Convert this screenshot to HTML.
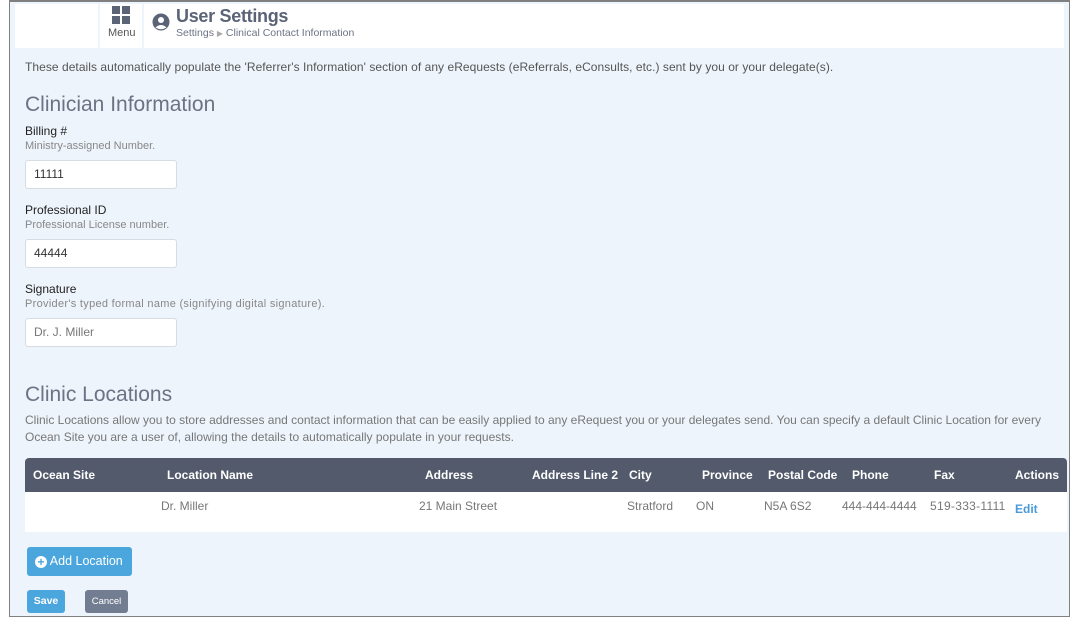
<!DOCTYPE html>
<html><head><style>
*{box-sizing:border-box;margin:0;padding:0}
body{width:1071px;height:617px;background:#fff;font-family:"Liberation Sans",sans-serif;position:relative;overflow:hidden}
.frame{position:absolute;left:9px;top:0;width:1061px;height:617px;border:1px solid #808080;border-top:2px solid #808080;background:#edf4fb}
.a{position:absolute;white-space:nowrap}
.hdr{position:absolute;left:5px;top:2px;width:1049px;height:44px;background:#fff}
.lbl{font-size:12px;color:#222}
.sub{font-size:11px;color:#888}
.inp{position:absolute;left:15px;width:152px;height:29px;background:#fff;border:1px solid #d5dce4;border-radius:3px;font-size:12px;color:#333;padding:6px 8px}
</style></head><body>
<div class="frame">
 <div class="hdr">
  <div class="a" style="left:83px;top:0;width:2px;height:44px;background:#edf4fb"></div>
  <div class="a" style="left:127px;top:0;width:2px;height:44px;background:#edf4fb"></div>
  <div class="a" style="left:97px;top:2px;width:8px;height:8px;background:#5b6477"></div>
  <div class="a" style="left:107px;top:2px;width:8px;height:8px;background:#5b6477"></div>
  <div class="a" style="left:97px;top:12px;width:8px;height:8px;background:#5b6477"></div>
  <div class="a" style="left:107px;top:12px;width:8px;height:8px;background:#5b6477"></div>
  <div class="a" style="left:93px;top:23px;font-size:11px;color:#555">Menu</div>
  <svg class="a" style="left:137px;top:9px" width="18" height="18" viewBox="0 0 18 18"><circle cx="9" cy="9" r="8.5" fill="#5b6477"/><circle cx="9" cy="7" r="3" fill="#fff"/><path d="M3.5 14.5 Q9 9.5 14.5 14.5 Q9 18 3.5 14.5Z" fill="#fff"/></svg>
  <div class="a" style="left:161px;top:2px;font-size:18px;color:#5b6477;font-weight:bold;letter-spacing:-0.3px">User Settings</div>
  <div class="a" style="left:161px;top:23px;font-size:10.5px;color:#6b7385">Settings <span style="color:#aaa;font-size:8px">▶</span> Clinical Contact Information</div>
 </div>
 <div class="a" style="left:15px;top:58px;font-size:12px;color:#555;letter-spacing:0.05px">These details automatically populate the 'Referrer's Information' section of any eRequests (eReferrals, eConsults, etc.) sent by you or your delegate(s).</div>
 <div class="a" style="left:15px;top:91px;font-size:21px;color:#6b7385">Clinician Information</div>
 <div class="a lbl" style="left:15px;top:122px">Billing #</div>
 <div class="a sub" style="left:15px;top:138px">Ministry-assigned Number.</div>
 <div class="inp" style="top:158px">11111</div>
 <div class="a lbl" style="left:15px;top:201px">Professional ID</div>
 <div class="a sub" style="left:15px;top:217px">Professional License number.</div>
 <div class="inp" style="top:237px">44444</div>
 <div class="a lbl" style="left:15px;top:280px">Signature</div>
 <div class="a sub" style="left:15px;top:296px;letter-spacing:0.3px">Provider's typed formal name (signifying digital signature).</div>
 <div class="inp" style="top:316px;color:#777">Dr. J. Miller</div>
 <div class="a" style="left:15px;top:381px;font-size:21px;color:#6b7385">Clinic Locations</div>
 <div class="a" style="left:15px;top:410px;font-size:12px;color:#777;line-height:17px;white-space:normal;width:1040px">Clinic Locations allow you to store addresses and contact information that can be easily applied to any eRequest you or your delegates send. You can specify a default Clinic Location for every Ocean Site you are a user of, allowing the details to automatically populate in your requests.</div>
 <div class="a" style="left:15px;top:456px;width:1042px;height:74px;background:#fff;border-radius:4px 4px 0 0;overflow:hidden">
  <div class="a" style="left:0;top:0;width:1042px;height:34px;background:#535a6b"></div>
  <div class="a" style="left:8px;top:10px;color:#fff;font-size:12px;font-weight:bold">Ocean Site</div>
  <div class="a" style="left:142px;top:10px;color:#fff;font-size:12px;font-weight:bold">Location Name</div>
  <div class="a" style="left:400px;top:10px;color:#fff;font-size:12px;font-weight:bold">Address</div>
  <div class="a" style="left:507px;top:10px;color:#fff;font-size:12px;font-weight:bold">Address Line 2</div>
  <div class="a" style="left:604px;top:10px;color:#fff;font-size:12px;font-weight:bold">City</div>
  <div class="a" style="left:677px;top:10px;color:#fff;font-size:12px;font-weight:bold">Province</div>
  <div class="a" style="left:743px;top:10px;color:#fff;font-size:12px;font-weight:bold">Postal Code</div>
  <div class="a" style="left:827px;top:10px;color:#fff;font-size:12px;font-weight:bold">Phone</div>
  <div class="a" style="left:909px;top:10px;color:#fff;font-size:12px;font-weight:bold">Fax</div>
  <div class="a" style="left:990px;top:10px;color:#fff;font-size:12px;font-weight:bold">Actions</div>
  <div class="a" style="left:136px;top:41px;color:#777;font-size:12px">Dr. Miller</div>
  <div class="a" style="left:394px;top:41px;color:#777;font-size:12px">21 Main Street</div>
  <div class="a" style="left:602px;top:41px;color:#777;font-size:12px">Stratford</div>
  <div class="a" style="left:671px;top:41px;color:#777;font-size:12px">ON</div>
  <div class="a" style="left:739px;top:41px;color:#777;font-size:12px">N5A 6S2</div>
  <div class="a" style="left:817px;top:41px;color:#777;font-size:12px">444-444-4444</div>
  <div class="a" style="left:905px;top:41px;color:#777;font-size:12px;letter-spacing:0.3px">519-333-1111</div>
  <div class="a" style="left:990px;top:44px;color:#4a9ad8;font-size:12px;font-weight:bold">Edit</div>
 </div>
 <div class="a" style="left:17px;top:545px;width:105px;height:29px;background:#4ba6dd;border-radius:3px;color:#fff;font-size:12.5px;padding:7px 0 0 8px">
  <span style="display:inline-block;width:12px;height:12px;border-radius:50%;background:#fff;color:#4ba6dd;font-size:12px;line-height:12px;text-align:center;font-weight:bold;vertical-align:-1px">+</span> Add Location</div>
 <div class="a" style="left:17px;top:588px;width:38px;height:23px;background:#4ba6dd;border-radius:3px;color:#fff;font-size:10.5px;font-weight:bold;text-align:center;line-height:23px">Save</div>
 <div class="a" style="left:75px;top:588px;width:43px;height:23px;background:#737d91;border-radius:3px;color:#fff;font-size:9.5px;text-align:center;line-height:23px">Cancel</div>
</div>
</body></html>
